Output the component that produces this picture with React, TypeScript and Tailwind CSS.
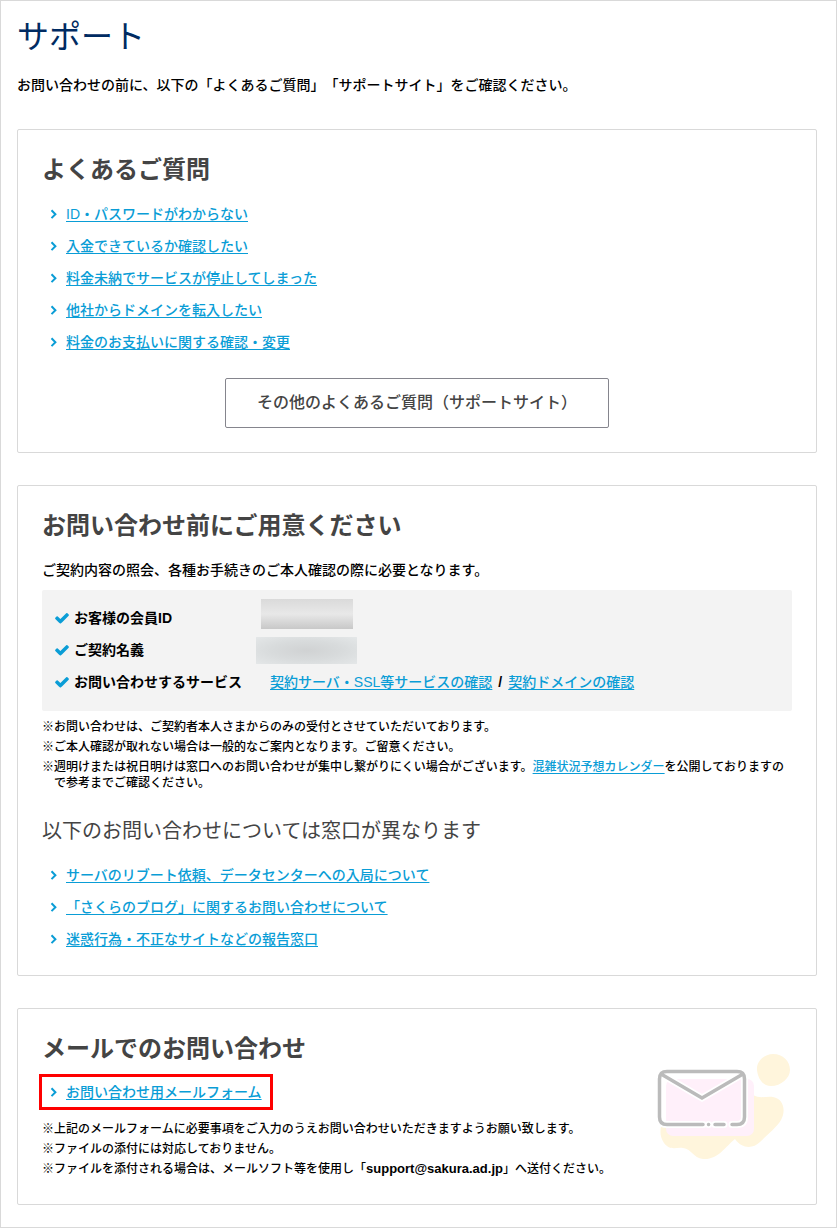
import type { ReactNode } from 'react'

const FAQ_LINKS = [
  'ID・パスワードがわからない',
  '入金できているか確認したい',
  '料金未納でサービスが停止してしまった',
  '他社からドメインを転入したい',
  '料金のお支払いに関する確認・変更',
]

const OTHER_DESK_LINKS = [
  'サーバのリブート依頼、データセンターへの入局について',
  '「さくらのブログ」に関するお問い合わせについて',
  '迷惑行為・不正なサイトなどの報告窓口',
]

function ArrowIcon() {
  return (
    <svg viewBox="0 0 8 10" className="h-[10px] w-2 shrink-0" aria-hidden="true">
      <path d="M1.500 1.300L5.400 5.200L1.500 9.100" fill="none" stroke="#0a9dd6" strokeWidth="2" />
    </svg>
  )
}

function CheckIcon() {
  return (
    <svg viewBox="0 0 1792 1792" className="h-4 w-4 shrink-0" aria-hidden="true">
      <path
        d="M1671 566q0 40-28 68l-724 724-136 136q-28 28-68 28t-68-28l-136-136-362-362q-28-28-28-68t28-68l136-136q28-28 68-28t68 28l294 295 656-657q28-28 68-28t68 28l136 136q28 28 28 68z"
        fill="#0a9dd6"
      />
    </svg>
  )
}

function TextLink({ children }: { children: ReactNode }) {
  return (
    <a href="#" className="text-[#0a9dd6] underline decoration-1 underline-offset-2">
      {children}
    </a>
  )
}

function LinkList({ items }: { items: string[] }) {
  return (
    <ul>
      {items.map((item) => (
        <li key={item} className="flex h-8 items-center gap-2 pl-2">
          <ArrowIcon />
          <TextLink>{item}</TextLink>
        </li>
      ))}
    </ul>
  )
}

function Panel({ title, children }: { title: string; children: ReactNode }) {
  return (
    <section className="rounded-xs border border-[#d9d9d9] px-6 pt-6">
      <h2 className="text-2xl leading-8 font-bold text-[#444]">{title}</h2>
      {children}
    </section>
  )
}

function CheckRow({ label, children }: { label: string; children: ReactNode }) {
  return (
    <div className="flex h-8 items-center">
      <dt className="flex w-[200px] shrink-0 items-center gap-1 font-bold">
        <CheckIcon />
        {label}
      </dt>
      <dd className="flex-1">{children}</dd>
    </div>
  )
}

function Note({ children }: { children: ReactNode }) {
  return <li className="pl-3 -indent-3">※{children}</li>
}

function MailIllustration() {
  const outline =
    'M46 71.500H10Q2.500 71.500 2.500 64V26Q2.500 18.500 10 18.500H80Q87.500 18.500 87.500 26V64Q87.500 71.500 80 71.500H75M67 71.500H58M51.500 71.500H51.600M4 21L45 45L86 21'

  return (
    <svg viewBox="0 0 136 110" className="h-[110px] w-[136px]" aria-hidden="true">
      <path
        d="M100 17C99 9 107 1 116 1C126 1 133 8 133 17C133 25 124 33 114 33C106 33 101 26 100 17Z"
        fill="#fff5dc"
      />
      <path
        d="M96 42C103 46 109 43 116 44C127 46 129 58 124 67C120 74 109 83 103 89C96 96 85 96 78 86C68 94 61 107 46 106C36 105 35 96 26 95C19 94 13 98 7 90C3 84 3 79 4 73L96 72Z"
        fill="#fff5dc"
      />
      <rect x="9" y="26" width="88" height="57" rx="7" fill="#fff0fa" />
      <path d={outline} fill="none" stroke="#fff" strokeWidth="7" strokeLinecap="round" />
      <path d={outline} fill="none" stroke="#bbb" strokeWidth="3.500" strokeLinecap="round" />
    </svg>
  )
}

export default function App() {
  return (
    <main
      lang="ja"
      className="border border-[#d9d9d9] bg-white px-4 pb-[22px] text-sm font-medium text-black [text-spacing-trim:space-all] font-['Liberation_Sans','Noto_Sans_CJK_JP',sans-serif]"
    >
      <h1 className="pt-4 text-[32px] leading-10 font-normal text-[#002b62]">サポート</h1>
      <p className="pt-4 leading-6">
        お問い合わせの前に、以下の「よくあるご質問」「サポートサイト」をご確認ください。
      </p>

      <div className="mt-8 flex flex-col gap-8 pr-[3px]">
        <Panel title="よくあるご質問">
          <div className="pt-3 pb-6">
            <LinkList items={FAQ_LINKS} />
            <div className="mt-5 flex justify-center">
              <button
                type="button"
                className="h-[50px] w-96 rounded-xs border border-[#85858d] text-base text-[#444]"
              >
                その他のよくあるご質問（サポートサイト）
              </button>
            </div>
          </div>
        </Panel>

        <Panel title="お問い合わせ前にご用意ください">
          <p className="pt-4 leading-6">
            ご契約内容の照会、各種お手続きのご本人確認の際に必要となります。
          </p>
          <dl className="mt-2 rounded-xs bg-[#f3f3f3] px-3 pt-3 pb-[13px]">
            <CheckRow label="お客様の会員ID">
              <div className="mb-2 ml-[7px] h-[30px] w-[92px] bg-linear-to-b from-[#dadada] via-[#e8e8e8] to-[#c8c8c8]" />
            </CheckRow>
            <CheckRow label="ご契約名義">
              <div className="ml-[2px] h-[27px] w-[101px] bg-[radial-gradient(ellipse_at_center,#d0d2d3,#d8dbdc_50%,#e4e7e8)]" />
            </CheckRow>
            <CheckRow label="お問い合わせするサービス">
              <div className="pl-4">
                <TextLink>契約サーバ・SSL等サービスの確認</TextLink>
                <span className="px-[6px] font-bold">/</span>
                <TextLink>契約ドメインの確認</TextLink>
              </div>
            </CheckRow>
          </dl>
          <ul className="mt-2 flex flex-col gap-1 text-xs leading-4">
            <Note>お問い合わせは、ご契約者本人さまからのみの受付とさせていただいております。</Note>
            <Note>ご本人確認が取れない場合は一般的なご案内となります。ご留意ください。</Note>
            <Note>
              週明けまたは祝日明けは窓口へのお問い合わせが集中し繋がりにくい場合がございます。
              <TextLink>混雑状況予想カレンダー</TextLink>
              を公開しておりますので参考までご確認ください。
            </Note>
          </ul>
          <h3 className="pt-6 text-xl leading-8 font-normal text-[#444]">
            以下のお問い合わせについては窓口が異なります
          </h3>
          <div className="pt-3 pb-5">
            <LinkList items={OTHER_DESK_LINKS} />
          </div>
        </Panel>

        <div className="relative">
          <Panel title="メールでのお問い合わせ">
            <div className="-ml-[3px] mt-[9px] w-fit border-3 border-[#fe0000] pr-2">
              <div className="-my-px">
                <LinkList items={['お問い合わせ用メールフォーム']} />
              </div>
            </div>
            <ul className="flex flex-col gap-1 pt-[11px] pb-[27px] text-xs leading-4">
              <Note>上記のメールフォームに必要事項をご入力のうえお問い合わせいただきますようお願い致します。</Note>
              <Note>ファイルの添付には対応しておりません。</Note>
              <Note>
                ファイルを添付される場合は、メールソフト等を使用し「
                <strong className="text-[13px] leading-4">support@sakura.ad.jp</strong>」へ送付ください。
              </Note>
            </ul>
          </Panel>
          <div className="absolute top-[45px] right-6">
            <MailIllustration />
          </div>
        </div>
      </div>
    </main>
  )
}
